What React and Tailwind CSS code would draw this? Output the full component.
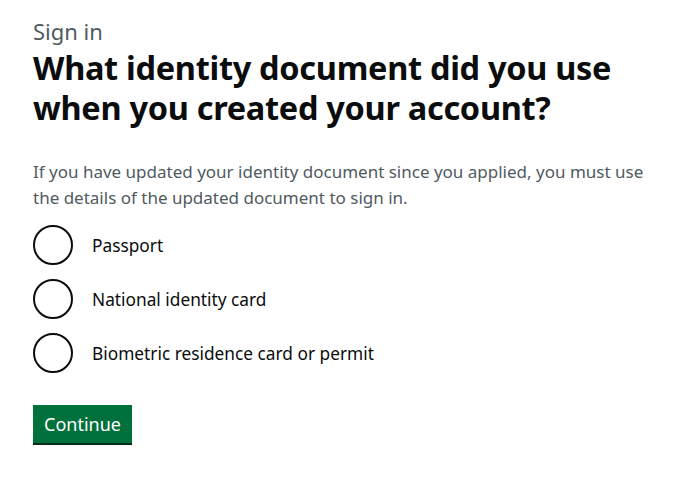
import React, { useState } from "react";

const options = [
  { id: "passport", label: "Passport" },
  { id: "national", label: "National identity card" },
  { id: "brp", label: "Biometric residence card or permit" },
];

export default function App() {
  const [selected, setSelected] = useState("");

  return (
    <div className="min-h-screen bg-white pl-[33px] pr-[15px] pt-[18px] text-[#0b0c0c] font-['Noto_Sans',sans-serif]">
      <span className="block text-[22px] leading-[26px] text-[#505a5f] mb-[4px]">Sign in</span>
      <h1 className="text-[32.5px] font-bold leading-[40px] tracking-[-0.3px] mb-[31px]">
        What identity document did you use when you created your account?
      </h1>

      <p className="max-w-[620px] text-[17px] leading-[26px] text-[#505a5f] mb-[14px]">
        If you have updated your identity document since you applied, you must use the details of the updated document to sign in.
      </p>

      <div className="flex flex-col gap-[14px]">
        {options.map((opt) => (
          <label key={opt.id} className="flex items-center gap-[19px] cursor-pointer">
            <span className="w-[40px] h-[40px] rounded-full border-2 border-[#0b0c0c] flex items-center justify-center shrink-0">
              {selected === opt.id && <span className="w-[20px] h-[20px] rounded-full bg-[#0b0c0c]" />}
            </span>
            <input
              type="radio"
              name="doc"
              className="sr-only"
              checked={selected === opt.id}
              onChange={() => setSelected(opt.id)}
            />
            <span className="text-[17.3px] leading-[25px]">{opt.label}</span>
          </label>
        ))}
      </div>

      <button className="mt-[32px] h-[38px] px-[11px] bg-[#00703c] text-white text-[18px] shadow-[0_2px_0_#002d18]">
        Continue
      </button>
    </div>
  );
}
